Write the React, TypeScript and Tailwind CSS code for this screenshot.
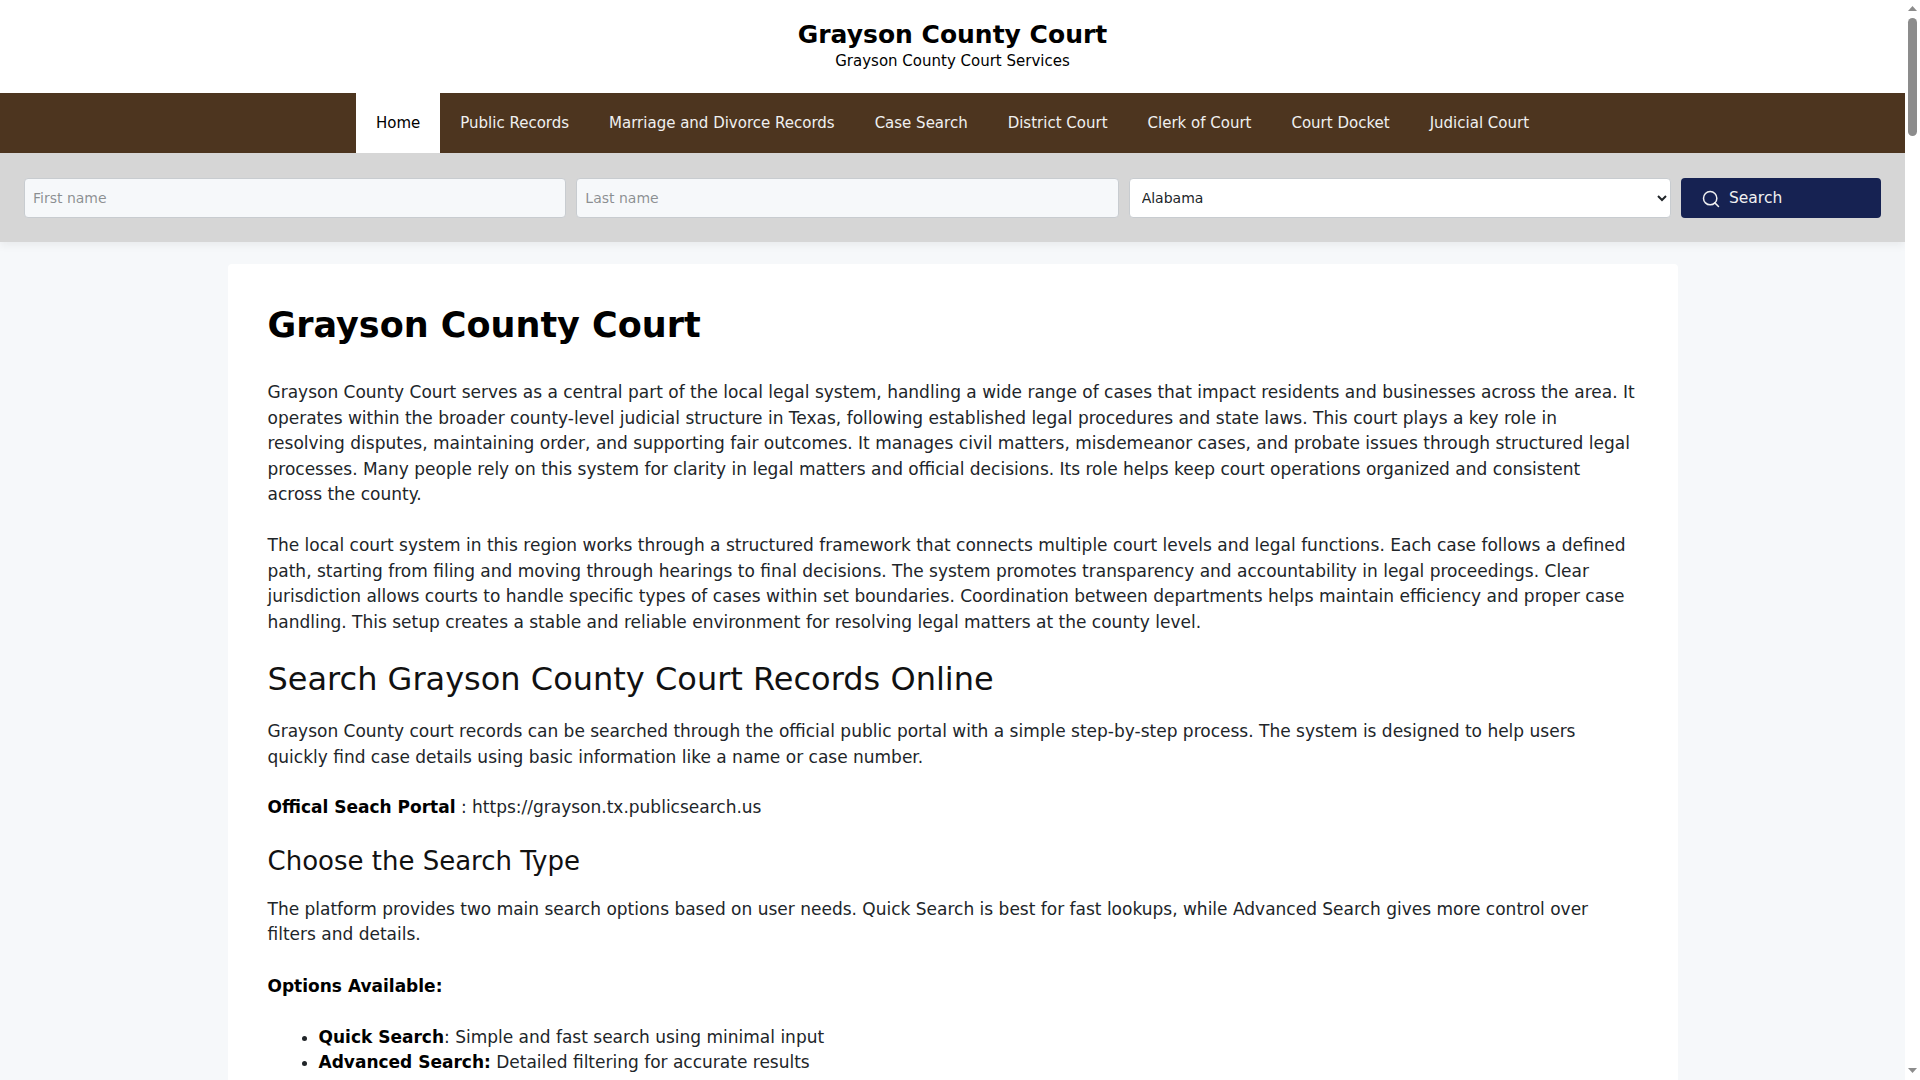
import React from 'react';
import { Search } from 'lucide-react';

const navLinks = [
    'Home',
    'Public Records',
    'Marriage and Divorce Records',
    'Case Search',
    'District Court',
    'Clerk of Court',
    'Court Docket',
    'Judicial Court',
];

const App = () => {
    return (
        <div className="flex h-screen overflow-hidden bg-white text-[#212529] font-['DejaVu_Sans',sans-serif] text-[17px] leading-[1.5]">
            <div className="flex-1 min-w-0 overflow-hidden bg-[#f6f8fa]">
                <header className="bg-white h-[93px] flex flex-col items-center pt-[18px] text-black">
                    <h4 className="text-[25px] font-bold leading-[34px]">Grayson County Court</h4>
                    <p className="text-[15px] leading-[18px]">Grayson County Court Services</p>
                </header>

                <nav className="bg-[#4d351f] h-[60px] flex justify-center text-[15px]">
                    {navLinks.map((link, i) => (
                        <a
                            key={link}
                            className={
                                i === 0
                                    ? 'px-5 flex items-center bg-white text-black'
                                    : 'px-5 flex items-center text-[#f0f0f0]'
                            }
                        >
                            {link}
                        </a>
                    ))}
                </nav>

                <div className="bg-[#d6d6d6] h-[89px] px-6 flex items-center gap-[10px] shadow-[0_4px_8px_rgba(0,0,0,0.05)]">
                    <input
                        type="text"
                        placeholder="First name"
                        className="flex-1 min-w-0 h-[40px] bg-[#f6f8fa] border border-[#c8ccd0] rounded px-2 text-sm"
                    />
                    <input
                        type="text"
                        placeholder="Last name"
                        className="flex-1 min-w-0 h-[40px] bg-[#f6f8fa] border border-[#c8ccd0] rounded px-2 text-sm"
                    />
                    <select className="flex-1 min-w-0 h-[40px] bg-white border border-[#c8ccd0] rounded px-2 text-sm">
                        <option>Alabama</option>
                        <option>Alaska</option>
                        <option>Texas</option>
                    </select>
                    <button className="w-[200px] h-[40px] bg-[#162252] text-[#f0f0f0] rounded flex items-center pl-[20px] pt-[2px] gap-[8px] text-[15.5px]">
                        <Search size={20} strokeWidth={1.8} />
                        Search
                    </button>
                </div>

                <div className="pt-[22px]">
                    <main className="w-[1450px] mx-auto bg-white rounded px-10 pt-[30px] pb-10">
                        <h1 className="text-[35px] font-bold leading-[1.2] mt-[10px] mb-[34px] text-black">Grayson County Court</h1>
                        <p>
                            Grayson County Court serves as a central part of the local legal system, handling a wide range of cases that impact residents and businesses across the area. It operates within the broader county-level judicial structure in Texas, following established legal procedures and state laws. This court plays a key role in resolving disputes, maintaining order, and supporting fair outcomes. It manages civil matters, misdemeanor cases, and probate issues through structured legal processes. Many people rely on this system for clarity in legal matters and official decisions. Its role helps keep court operations organized and consistent across the county.
                        </p>
                        <p className="mt-[25.5px]">
                            The local court system in this region works through a structured framework that connects multiple court levels and legal functions. Each case follows a defined path, starting from filing and moving through hearings to final decisions. The system promotes transparency and accountability in legal proceedings. Clear jurisdiction allows courts to handle specific types of cases within set boundaries. Coordination between departments helps maintain efficiency and proper case handling. This setup creates a stable and reliable environment for resolving legal matters at the county level.
                        </p>
                        <h2 className="text-[32px] leading-[1.2] mt-[25px] mb-[21px] text-[#111]">Search Grayson County Court Records Online</h2>
                        <p>
                            Grayson County court records can be searched through the official public portal with a simple step-by-step process. The system is designed to help users quickly find case details using basic information like a name or case number.
                        </p>
                        <p className="mt-[24.5px]">
                            <strong className="text-black">Offical Seach Portal</strong> : https://grayson.tx.publicsearch.us
                        </p>
                        <h3 className="text-[26px] leading-[1.2] mt-[26px] mb-[19px] text-[#111]">Choose the Search Type</h3>
                        <p>
                            The platform provides two main search options based on user needs. Quick Search is best for fast lookups, while Advanced Search gives more control over filters and details.
                        </p>
                        <p className="mt-[26px]">
                            <strong className="text-black">Options Available:</strong>
                        </p>
                        <ul className="list-disc pl-[51px] mt-[25.5px]">
                            <li>
                                <strong className="text-black">Quick Search</strong>: Simple and fast search using minimal input
                            </li>
                            <li>
                                <strong className="text-black">Advanced Search:</strong> Detailed filtering for accurate results
                            </li>
                        </ul>
                    </main>
                </div>
            </div>

            {/* page scrollbar */}
            <div className="w-[15px] shrink-0 bg-white flex flex-col items-center pt-[6px] pb-[7px]">
                <svg width="9" height="5" viewBox="0 0 9 5" className="fill-[#8c8c8c]">
                    <path d="M4.5 0L9 5H0z" />
                </svg>
                <div className="w-[9px] h-[118px] mt-[7px] rounded-full bg-[#8c8c8c]" />
                <div className="flex-1" />
                <svg width="9" height="5" viewBox="0 0 9 5" className="fill-[#8c8c8c]">
                    <path d="M0 0H9L4.5 5z" />
                </svg>
            </div>
        </div>
    );
};

export default App;
